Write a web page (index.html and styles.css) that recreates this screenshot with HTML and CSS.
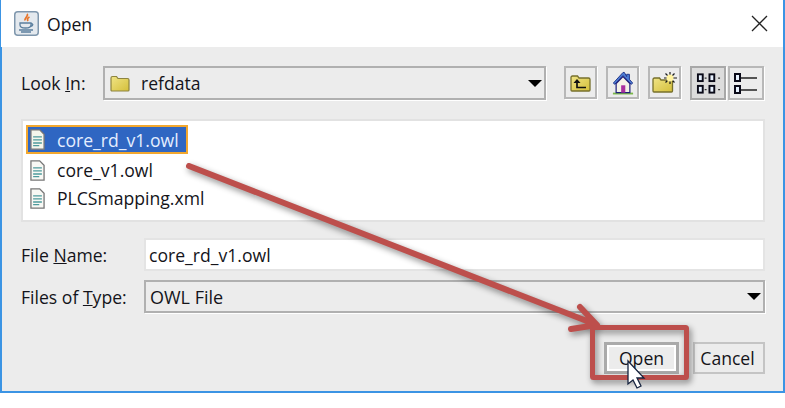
FILE: index.html
```html
<!DOCTYPE html>
<html lang="en">
<head>
  <meta charset="UTF-8">
  <title>Open</title>
  <link rel="stylesheet" href="styles.css">
</head>
<body>

<svg class="defs" width="0" height="0">
  <defs>
    <linearGradient id="folderFill" x1="0" y1="0" x2="1" y2="1">
      <stop offset="0" stop-color="#f0e486"/>
      <stop offset="1" stop-color="#d4bf3a"/>
    </linearGradient>
  </defs>
</svg>

<div class="window">
  <div class="title-bar">
    <svg class="java-icon" width="25" height="25" viewBox="0 0 25 25">
      <rect x="0.75" y="0.75" width="23.5" height="23.5" rx="3" fill="#e4e9ee" stroke="#7f97ad" stroke-width="1.5"/>
      <path d="M13 3c2 2-3 4-2 6.500M15.500 6c-2 1-2.500 2-1.500 4" fill="none" stroke="#e8752a" stroke-width="1.800"/>
      <path d="M6 12h11v2c0 2-2 3-5.500 3S6 16 6 14zM17 12.500c2.500 0 2.500 2.500-.5 3" fill="none" stroke="#5b7f9e" stroke-width="1.300"/>
      <path d="M5 19h14M7 21h10" stroke="#5b7f9e" stroke-width="1.300"/>
    </svg>
    <span class="title">Open</span>
    <svg class="close-icon" width="17" height="17" viewBox="0 0 17 17">
      <path d="M1 1l15 15M16 1L1 16" stroke="#222" stroke-width="1.300"/>
    </svg>
  </div>

  <div class="content">
    <div class="look-row">
      <label class="look-label">Look <u>I</u>n:</label>
      <div class="combo look-combo">
        <svg class="folder" width="20" height="17" viewBox="0 0 20 17">
          <path d="M1 15V3c0-1 .5-1.500 1.500-1.500h4L8 3.500h9.500c1 0 1.500.5 1.500 1.500v10c0 .7-.5 1-1 1H2c-.5 0-1-.3-1-1z" fill="url(#folderFill)" stroke="#8d8440" stroke-width="1.200"/>
        </svg>
        <span class="combo-text">refdata</span>
        <span class="arrow-down"></span>
      </div>
      <div class="tools">
        <button class="tool">
          <svg width="21" height="18" viewBox="0 0 21 18">
            <path d="M1 16V3.500c0-1 .5-1.500 1.500-1.500h5L9 4h9.500c1 0 1.500.5 1.500 1.500V16c0 .6-.4 1-1 1H2c-.6 0-1-.4-1-1z" fill="url(#folderFill)" stroke="#77702c" stroke-width="1.300"/>
            <path d="M7 8v5.500h9" fill="none" stroke="#111" stroke-width="1.700"/>
            <path d="M7 5l3.500 4h-7z" fill="#111"/>
          </svg>
        </button>
        <button class="tool">
          <svg width="22" height="24" viewBox="0 0 24 25">
            <path d="M1 24h22" stroke="#7cb84a" stroke-width="2"/>
            <path d="M12 1L1.500 12.500 3 14 12 4.500 21 14 22.500 12.500 19 8.500V3h-3v2.500L13.500 1z" fill="#4e7fd6" stroke="#1d2f86" stroke-width="1"/>
            <path d="M4.500 13L12 5.500 19.500 13v10h-15z" fill="#f5f2e6" stroke="#1d1d7a" stroke-width="1.300"/>
            <rect x="10" y="15" width="4.500" height="8" fill="#a92f9e"/>
          </svg>
        </button>
        <button class="tool">
          <svg width="26" height="21" viewBox="0 0 26 21">
            <path d="M1 19V7.500C1 6.500 1.500 6 2.500 6h5L9 8h10c1 0 1.500.5 1.500 1.500V19c0 .6-.4 1-1 1H2c-.6 0-1-.4-1-1z" fill="url(#folderFill)" stroke="#77702c" stroke-width="1.300"/>
            <path d="M18 0v12M12 6h13M13.500 1.500l9 9M22.500 1.500l-9 9" stroke="#1b1b1b" stroke-width="1.200"/>
            <circle cx="18" cy="6" r="3.500" fill="#fff3a0"/>
          </svg>
        </button>
        <button class="tool tool-active">
          <svg width="25" height="22" viewBox="0 0 26 22">
            <g fill="#e8f2ff" stroke="#0a0a18" stroke-width="2">
              <rect x="2" y="2" width="5" height="7"/><rect x="14" y="2" width="5" height="7"/>
              <rect x="2" y="14" width="5" height="7"/><rect x="14" y="14" width="5" height="7"/>
            </g>
            <path d="M9 6h2M23 6h2M9 18h2M23 18h2" stroke="#333" stroke-width="1.300"/>
          </svg>
        </button>
        <button class="tool tool-list">
          <svg width="24" height="22" viewBox="0 0 24 22">
            <g fill="#e8f2ff" stroke="#0a0a18" stroke-width="2">
              <rect x="1" y="2" width="5" height="7"/><rect x="1" y="14" width="5" height="7"/>
            </g>
            <path d="M7 6h16M7 18h16" stroke="#222" stroke-width="1.600"/>
          </svg>
        </button>
      </div>
    </div>

    <div class="file-list">
      <div class="file-row selected">
        <svg class="file-icon" width="17" height="21" viewBox="0 0 18 24">
          <path d="M1.500 1h10L16.500 6v17h-15z" fill="#f4f6ec" stroke="#777" stroke-width="1.500"/>
          <path d="M4 9h10M4 12.500h10M4 16h10M4 19h7" stroke="#4d9a9c" stroke-width="1.500"/>
        </svg>
        <span>core_rd_v1.owl</span>
      </div>
      <div class="file-row">
        <svg class="file-icon" width="17" height="21" viewBox="0 0 18 24">
          <path d="M1.500 1h10L16.500 6v17h-15z" fill="#f8f8f4" stroke="#777" stroke-width="1.500"/>
          <path d="M4 9h10M4 12.500h10M4 16h10M4 19h7" stroke="#4d9a9c" stroke-width="1.500"/>
        </svg>
        <span>core_v1.owl</span>
      </div>
      <div class="file-row">
        <svg class="file-icon" width="17" height="21" viewBox="0 0 18 24">
          <path d="M1.500 1h10L16.500 6v17h-15z" fill="#f8f8f4" stroke="#777" stroke-width="1.500"/>
          <path d="M4 9h10M4 12.500h10M4 16h10M4 19h7" stroke="#4d9a9c" stroke-width="1.500"/>
        </svg>
        <span>PLCSmapping.xml</span>
      </div>
    </div>

    <div class="form-grid">
      <label>File <u>N</u>ame:</label>
      <div class="text-input">core_rd_v1.owl</div>
      <label>Files of <u>T</u>ype:</label>
      <div class="combo type-combo">
        <span>OWL File</span>
        <span class="arrow-down"></span>
      </div>
    </div>

    <div class="actions">
      <button class="btn btn-default"><span>Open</span></button>
      <button class="btn btn-cancel">Cancel</button>
    </div>
  </div>

  <!-- Annotation drawn over the dialog -->
  <svg class="annotation" width="785" height="408" viewBox="0 0 785 408">
    <g class="mark">
      <path d="M189 166L592 323M580 307l17 18-26 4" fill="none" stroke="#bd4f4c" stroke-width="6" stroke-linejoin="round" stroke-linecap="round"/>
      <rect x="592.500" y="327.500" width="94" height="50" rx="1" fill="none" stroke="#bd4f4c" stroke-width="5"/>
    </g>
    <path class="cursor" d="M628 361v23l5-4 4 8 4-2-4-8h7z" fill="#fff" stroke="#16233f" stroke-width="1.300"/>
  </svg>
</div>

</body>
</html>
```

FILE: styles.css
```css
* {
  box-sizing: border-box;
}

body {
  margin: 0;
  background: #fff;
  font-family: "Open Sans", "Noto Sans", sans-serif;
  font-size: 17.6px;
  color: #14141a;
}

.defs {
  display: block;
}

.window {
  position: relative;
  width: 785px;
  height: 393px;
  background: #ececec;
  border: 2px solid #3b94e4;
  border-top: 0;
}

.title-bar {
  display: flex;
  align-items: center;
  height: 47px;
  margin-left: -1px;
  padding: 0 15px 0 13px;
  background: #fff;
}

.title {
  margin-left: 8px;
}

.close-icon {
  margin-left: auto;
}

.content {
  padding: 19px 18px 0 19px;
}

.look-row {
  display: flex;
  align-items: center;
  height: 34px;
}

.look-label {
  width: 82px;
}

.combo {
  display: flex;
  align-items: center;
  height: 100%;
  background: #ececec;
  border: 2px solid #b0b0b0;
  box-shadow: 1px 1px 0 #fff;
}

.look-combo {
  width: 443px;
  padding: 0 2px 0 5px;
}

.folder {
  flex: none;
}

.combo-text {
  margin-left: 11px;
}

.arrow-down {
  margin-left: auto;
  width: 0;
  height: 0;
  border-left: 7.5px solid transparent;
  border-right: 7.5px solid transparent;
  border-top: 7px solid #000;
}

.tools {
  display: flex;
  margin-left: 18px;
  height: 34px;
}

.tool {
  display: flex;
  align-items: center;
  justify-content: center;
  width: 33px;
  height: 33px;
  margin-right: 9px;
  padding: 0;
  background: #ececec;
  border: 2px solid #b8b8b8;
  box-shadow: 1px 1px 0 #fff;
}

.tool-active {
  width: 36px;
  height: 34px;
  margin-right: 2px;
  background: #dcdcdc;
  border-color: #a8a8a8;
}

.tool-list {
  width: 36px;
  height: 34px;
  margin-right: 0;
}

.file-list {
  height: 103px;
  margin-top: 19px;
  padding: 4px 3px;
  background: #fff;
  border: 2px solid #e2e2e2;
}

.file-row {
  display: flex;
  align-items: center;
  width: fit-content;
  height: 28px;
  padding: 0 6px 0 3px;
}

.file-row.selected {
  width: 162px;
  height: 29px;
  margin-bottom: 2px;
  background: #2f66c2;
  border: 2px solid #f2a72e;
  padding-left: 1px;
  color: #e4eeff;
}

.file-icon {
  flex: none;
  margin-right: 11px;
}

.form-grid {
  display: grid;
  grid-template-columns: 123px 621px;
  grid-auto-rows: 33px;
  row-gap: 9px;
  align-items: center;
  margin-top: 16px;
}

.text-input {
  display: flex;
  align-items: center;
  height: 33px;
  padding-left: 3px;
  background: #fff;
  border: 2px solid #e4e4e4;
}

.type-combo {
  padding: 0 2px 0 4px;
  font-size: 18px;
}

.actions {
  display: flex;
  justify-content: flex-end;
  gap: 14px;
  margin-top: 29px;
}

.btn {
  height: 32px;
  padding: 0;
  background: #ececec;
  font-family: inherit;
  font-size: 17.6px;
  color: #14141a;
}

.btn-default {
  width: 75px;
  border: 3px solid #aaa;
  box-shadow: inset 0 0 0 2px #fff;
}

.btn-cancel {
  width: 72px;
  padding-right: 3px;
  border: 2px solid #c4c4c4;
}

/* Red arrow, box and mouse pointer on top of the dialog */
.annotation {
  position: absolute;
  top: 0;
  left: -2px;
  pointer-events: none;
}

.mark {
  filter: drop-shadow(2px 3px 3px rgba(0, 0, 0, 0.45));
}
```
